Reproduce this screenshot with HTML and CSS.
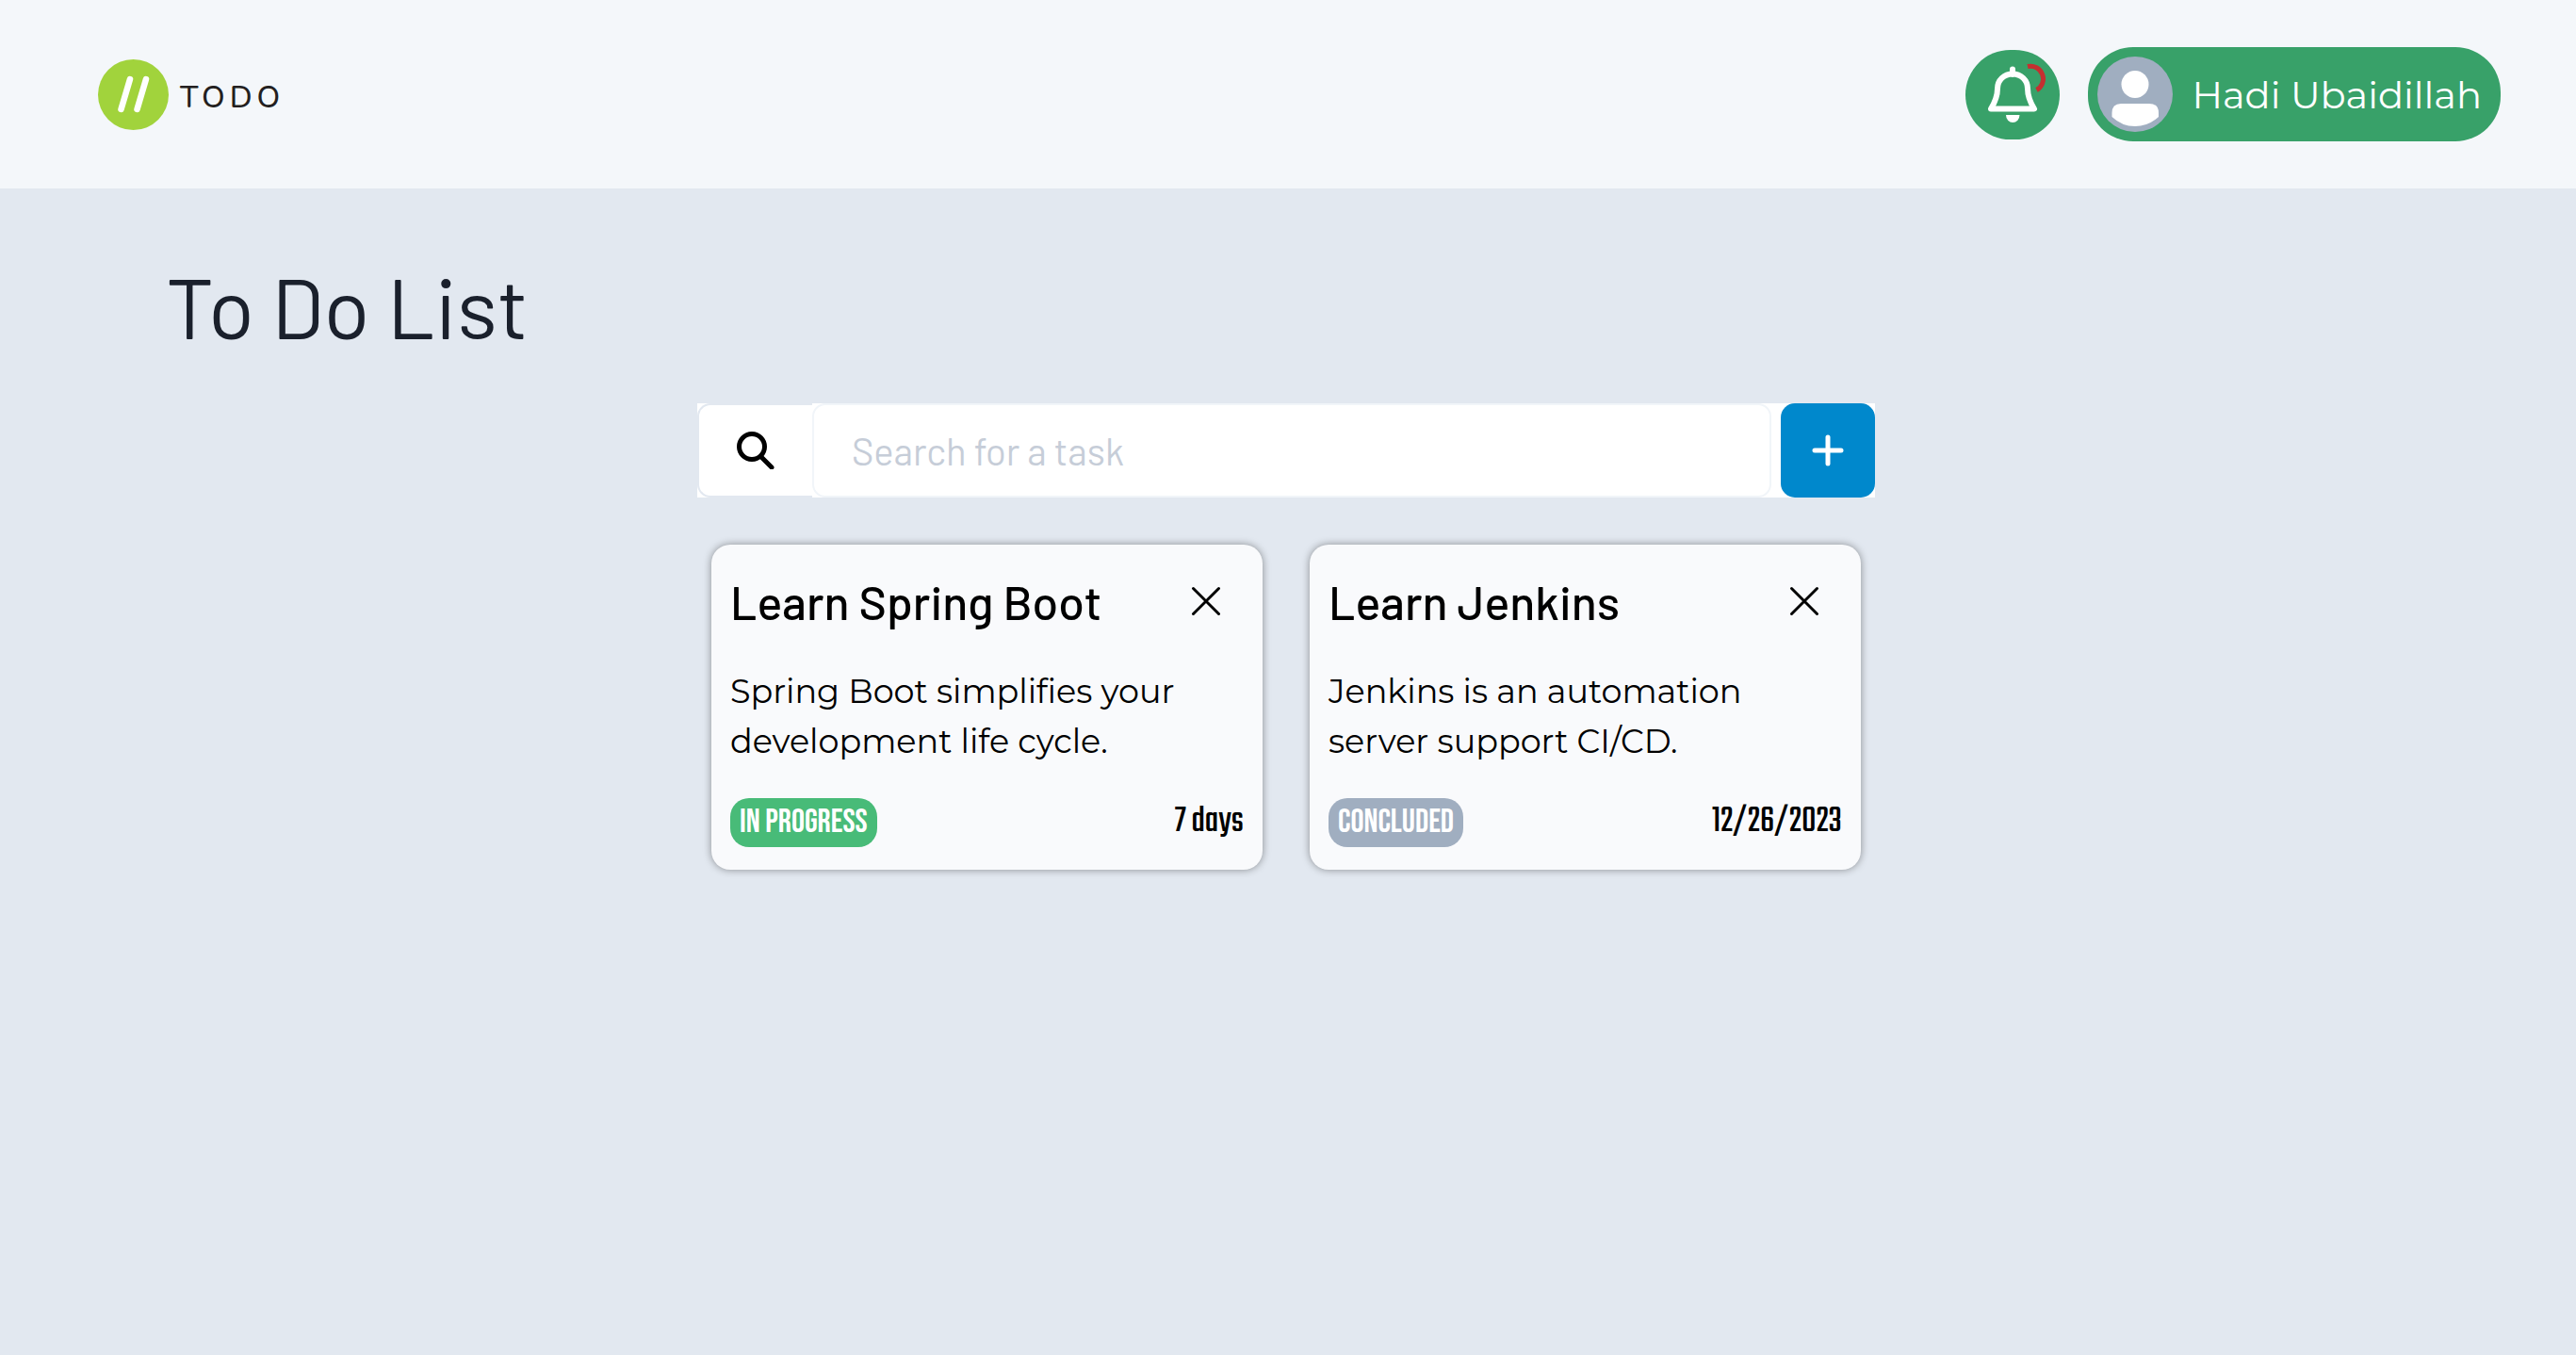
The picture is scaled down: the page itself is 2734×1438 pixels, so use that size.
FILE: index.html
```html
<!DOCTYPE html>
<html lang="en">
<head>
<meta charset="utf-8">
<title>To Do List</title>
<link rel="stylesheet" href="styles.css">
</head>
<body>
<header class="topbar">
  <a class="brand" href="#">
    <svg class="brand-mark" viewBox="0 0 75 75" aria-hidden="true">
      <circle cx="37.5" cy="37.5" r="37.5" fill="#a1d33c"/>
      <path d="M34 21 24.500 53M51 21 41.500 53" stroke="#fff" stroke-width="6.500" stroke-linecap="round"/>
    </svg>
    <span class="brand-name">TODO</span>
  </a>
  <div class="account">
    <button class="bell" type="button" aria-label="Notifications">
      <svg viewBox="0 0 100 95" aria-hidden="true">
        <path d="M50 20.500V26M27 62.500C31 56 34 50 34 41C34 32 41 25.500 50 25.500S66 32 66 41C66 50 69 56 73 62.500Z" fill="none" stroke="#fff" stroke-width="6" stroke-linecap="round" stroke-linejoin="round"/>
        <path d="M43 69H57.500A7.250 8 0 0 1 43 69Z" fill="#fff"/>
        <path d="M66 17.500A13.500 13.500 0 0 1 75.500 42.500" fill="none" stroke="#c53030" stroke-width="5"/>
      </svg>
    </button>
    <button class="profile" type="button">
      <svg class="avatar" viewBox="0 0 80 80" aria-hidden="true">
        <circle cx="40" cy="40" r="40" fill="#a0aec0"/>
        <circle cx="40" cy="29.500" r="14.500" fill="#fff"/>
        <path d="M25 50H55Q65 50 65 60V64Q54 74 40 74T15.500 64V60Q15.500 50 25 50Z" fill="#fff"/>
      </svg>
      <span>Hadi Ubaidillah</span>
    </button>
  </div>
</header>
<main class="page">
  <h1 class="title">To Do List</h1>
  <section class="board">
    <form class="search">
      <label class="search-icon" for="task-search" aria-label="Search">
        <svg viewBox="0 0 40 40" aria-hidden="true"><circle cx="16" cy="16" r="13.500"/><path d="M26 27 37 38"/></svg>
      </label>
      <input class="search-box" id="task-search" type="text" placeholder="Search for a task">
      <button class="add" type="button" aria-label="Add task">
        <svg viewBox="0 0 34 34" aria-hidden="true"><path d="M17 3V31M3 17H31"/></svg>
      </button>
    </form>
    <div class="cards">
      <article class="card">
        <div class="card-head">
          <h2>Learn Spring Boot</h2>
          <button class="close" type="button" aria-label="Remove Learn Spring Boot">
            <svg viewBox="0 0 30 30" aria-hidden="true"><path d="M1.500 1.500 28.500 28.500M28.500 1.500 1.500 28.500"/></svg>
          </button>
        </div>
        <p>Spring Boot simplifies your development life cycle.</p>
        <div class="card-foot">
          <span class="badge badge-progress">IN PROGRESS</span>
          <span class="due">7 days</span>
        </div>
      </article>
      <article class="card">
        <div class="card-head">
          <h2>Learn Jenkins</h2>
          <button class="close" type="button" aria-label="Remove Learn Jenkins">
            <svg viewBox="0 0 30 30" aria-hidden="true"><path d="M1.500 1.500 28.500 28.500M28.500 1.500 1.500 28.500"/></svg>
          </button>
        </div>
        <p>Jenkins is an automation server support CI/CD.</p>
        <div class="card-foot">
          <span class="badge badge-done">CONCLUDED</span>
          <span class="due">12/26/2023</span>
        </div>
      </article>
    </div>
  </section>
</main>
</body>
</html>
```
FILE: styles.css
```css
* { box-sizing: border-box; }

body {
  margin: 0;
  min-height: 100vh;
  background: #e2e8f0;
  color: #000;
  font-family: "Montserrat", "Open Sans", sans-serif;
}

button {
  border: 0;
  padding: 0;
  font: inherit;
  color: inherit;
  cursor: pointer;
}

svg { display: block; }

/* Top bar */
.topbar {
  display: flex;
  align-items: center;
  justify-content: space-between;
  height: 200px;
  padding: 0 80px 0 104px;
  background: #f4f7fa;
}

.brand {
  display: flex;
  align-items: center;
  gap: 12px;
  color: #231f20;
  text-decoration: none;
}

.brand-mark { width: 75px; height: 75px; }

.brand-name {
  padding-top: 8px;
  font-family: "Nunito", "Quicksand", "Montserrat", sans-serif;
  font-size: 32px;
  font-weight: 500;
  line-height: 40px;
  letter-spacing: 5px;
}

.account {
  display: flex;
  align-items: center;
  gap: 30px;
}

.bell {
  width: 100px;
  height: 95px;
  border-radius: 48px;
  background: #38a169;
}

.profile {
  display: flex;
  align-items: center;
  gap: 20px;
  height: 100px;
  padding: 0 20px 0 10px;
  border-radius: 48px;
  background: #38a169;
  color: #fff;
  font-size: 40px;
  font-weight: 400;
}

.avatar { width: 80px; height: 80px; }

/* Page */
.page { padding: 70px 4px 80px 0; }

.title {
  margin: 0 0 50px;
  padding-left: 176px;
  color: #1a202c;
  font-family: "Barlow", "Roboto", sans-serif;
  font-size: 90px;
  font-weight: 400;
  line-height: 108px;
}

.board {
  max-width: 1250px;
  margin: 0 auto;
}

/* Search */
.search {
  display: flex;
  height: 100px;
  margin: 0 0 50px;
  background: #fff;
}

.search-icon {
  display: flex;
  align-items: center;
  justify-content: center;
  width: 122px;
  border: 2px solid #e2e8f0;
  border-right: 0;
  border-radius: 14px 0 0 14px;
}

.search-icon svg,
.add svg,
.close svg {
  fill: none;
  stroke: currentColor;
  stroke-linecap: round;
}

.search-icon svg { width: 40px; height: 40px; stroke-width: 5; }

.search-box {
  flex: 1;
  min-width: 0;
  margin-right: 10px;
  padding: 0 40px;
  border: 2px solid #f1f5f9;
  border-radius: 14px;
  background: #fff;
  font-family: "Barlow", "Roboto", sans-serif;
  font-size: 40px;
}

.search-box::placeholder { color: #c6cdd8; opacity: 1; }

.add {
  display: flex;
  align-items: center;
  justify-content: center;
  width: 100px;
  border-radius: 15px;
  background: #0088cc;
  color: #fff;
}

.add svg { width: 34px; height: 34px; stroke-width: 5; }

/* Cards */
.cards {
  display: grid;
  grid-template-columns: 1fr 1fr;
  gap: 50px;
  padding: 0 15px;
}

.card {
  padding: 20px 20px 24px;
  border-radius: 20px;
  background: #f9fafc;
  box-shadow: 0 0 8px rgba(0, 0, 0, 0.4);
}

.card-head {
  display: flex;
  align-items: center;
  justify-content: space-between;
  margin-bottom: 34px;
  padding: 5px 25px 0 0;
}

.card h2 {
  margin: 0;
  font-family: "Barlow", "Roboto", sans-serif;
  font-size: 50px;
  font-weight: 500;
  line-height: 70px;
}

.close { background: none; }
.close svg { width: 30px; height: 30px; stroke-width: 3; overflow: visible; }

.card p {
  margin: 0 0 34px;
  font-size: 35px;
  line-height: 53px;
}

.card-foot {
  display: flex;
  align-items: flex-start;
  justify-content: space-between;
}

.badge {
  padding: 0 10px;
  border-radius: 20px;
  color: #fff;
  font-family: "Bebas Neue", "Roboto Condensed", sans-serif;
  font-size: 35px;
  line-height: 52px;
}

.badge-progress { background: #48bb78; }
.badge-done { background: #a0aec0; }

.due {
  font-family: "Teko", "Roboto Condensed", sans-serif;
  font-size: 40px;
  font-weight: 400;
  line-height: 52px;
}
```
